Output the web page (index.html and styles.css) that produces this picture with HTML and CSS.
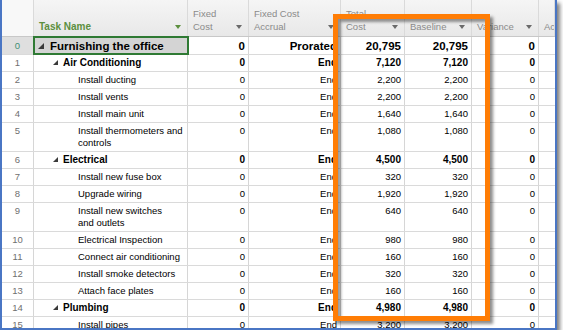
FILE: index.html
```html
<!DOCTYPE html>
<html lang="en">
<head>
  <meta charset="UTF-8" />
  <meta name="viewport" content="width=device-width, initial-scale=1.0" />
  <title>Furnishing the office - Cost table</title>
  <link rel="stylesheet" href="styles.css">
</head>
<body>
  <div class="sheet">
    <div class="head">
      <div class="c num"></div>
      <div class="c task green"><span>Task Name</span><span class="arrow"></span></div>
      <div class="c fc"><span>Fixed<br>Cost</span><span class="arrow"></span></div>
      <div class="c acc"><span>Fixed Cost<br>Accrual</span><span class="arrow"></span></div>
      <div class="c tot"><span>Total<br>Cost</span><span class="arrow"></span></div>
      <div class="c base"><span>Baseline</span><span class="arrow"></span></div>
      <div class="c var"><span>Variance</span><span class="arrow"></span></div>
      <div class="c act"><span>Actual Cost</span><span class="arrow"></span></div>
    </div>

    <div class="row top">
      <div class="c num">0</div>
      <div class="c task lv0"><span class="tog"></span>Furnishing the office</div>
      <div class="c fc">0</div>
      <div class="c acc">Prorated</div>
      <div class="c tot">20,795</div>
      <div class="c base">20,795</div>
      <div class="c var">0</div>
      <div class="c act"></div>
    </div>

    <div class="row sum">
      <div class="c num">1</div>
      <div class="c task lv1"><span class="tog"></span>Air Conditioning</div>
      <div class="c fc">0</div>
      <div class="c acc">End</div>
      <div class="c tot">7,120</div>
      <div class="c base">7,120</div>
      <div class="c var">0</div>
      <div class="c act"></div>
    </div>
    <div class="row">
      <div class="c num">2</div>
      <div class="c task lv2">Install ducting</div>
      <div class="c fc">0</div>
      <div class="c acc">End</div>
      <div class="c tot">2,200</div>
      <div class="c base">2,200</div>
      <div class="c var">0</div>
      <div class="c act"></div>
    </div>
    <div class="row">
      <div class="c num">3</div>
      <div class="c task lv2">Install vents</div>
      <div class="c fc">0</div>
      <div class="c acc">End</div>
      <div class="c tot">2,200</div>
      <div class="c base">2,200</div>
      <div class="c var">0</div>
      <div class="c act"></div>
    </div>
    <div class="row">
      <div class="c num">4</div>
      <div class="c task lv2">Install main unit</div>
      <div class="c fc">0</div>
      <div class="c acc">End</div>
      <div class="c tot">1,640</div>
      <div class="c base">1,640</div>
      <div class="c var">0</div>
      <div class="c act"></div>
    </div>
    <div class="row tall">
      <div class="c num">5</div>
      <div class="c task lv2">Install thermometers and<br>controls</div>
      <div class="c fc">0</div>
      <div class="c acc">End</div>
      <div class="c tot">1,080</div>
      <div class="c base">1,080</div>
      <div class="c var">0</div>
      <div class="c act"></div>
    </div>

    <div class="row sum">
      <div class="c num">6</div>
      <div class="c task lv1"><span class="tog"></span>Electrical</div>
      <div class="c fc">0</div>
      <div class="c acc">End</div>
      <div class="c tot">4,500</div>
      <div class="c base">4,500</div>
      <div class="c var">0</div>
      <div class="c act"></div>
    </div>
    <div class="row">
      <div class="c num">7</div>
      <div class="c task lv2">Install new fuse box</div>
      <div class="c fc">0</div>
      <div class="c acc">End</div>
      <div class="c tot">320</div>
      <div class="c base">320</div>
      <div class="c var">0</div>
      <div class="c act"></div>
    </div>
    <div class="row">
      <div class="c num">8</div>
      <div class="c task lv2">Upgrade wiring</div>
      <div class="c fc">0</div>
      <div class="c acc">End</div>
      <div class="c tot">1,920</div>
      <div class="c base">1,920</div>
      <div class="c var">0</div>
      <div class="c act"></div>
    </div>
    <div class="row tall">
      <div class="c num">9</div>
      <div class="c task lv2">Install new switches<br>and outlets</div>
      <div class="c fc">0</div>
      <div class="c acc">End</div>
      <div class="c tot">640</div>
      <div class="c base">640</div>
      <div class="c var">0</div>
      <div class="c act"></div>
    </div>
    <div class="row">
      <div class="c num">10</div>
      <div class="c task lv2">Electrical Inspection</div>
      <div class="c fc">0</div>
      <div class="c acc">End</div>
      <div class="c tot">980</div>
      <div class="c base">980</div>
      <div class="c var">0</div>
      <div class="c act"></div>
    </div>
    <div class="row">
      <div class="c num">11</div>
      <div class="c task lv2">Connect air conditioning</div>
      <div class="c fc">0</div>
      <div class="c acc">End</div>
      <div class="c tot">160</div>
      <div class="c base">160</div>
      <div class="c var">0</div>
      <div class="c act"></div>
    </div>
    <div class="row">
      <div class="c num">12</div>
      <div class="c task lv2">Install smoke detectors</div>
      <div class="c fc">0</div>
      <div class="c acc">End</div>
      <div class="c tot">320</div>
      <div class="c base">320</div>
      <div class="c var">0</div>
      <div class="c act"></div>
    </div>
    <div class="row">
      <div class="c num">13</div>
      <div class="c task lv2">Attach face plates</div>
      <div class="c fc">0</div>
      <div class="c acc">End</div>
      <div class="c tot">160</div>
      <div class="c base">160</div>
      <div class="c var">0</div>
      <div class="c act"></div>
    </div>

    <div class="row sum">
      <div class="c num">14</div>
      <div class="c task lv1"><span class="tog"></span>Plumbing</div>
      <div class="c fc">0</div>
      <div class="c acc">End</div>
      <div class="c tot">4,980</div>
      <div class="c base">4,980</div>
      <div class="c var">0</div>
      <div class="c act"></div>
    </div>
    <div class="row">
      <div class="c num">15</div>
      <div class="c task lv2">Install pipes</div>
      <div class="c fc">0</div>
      <div class="c acc">End</div>
      <div class="c tot">3,200</div>
      <div class="c base">3,200</div>
      <div class="c var">0</div>
      <div class="c act"></div>
    </div>

    <div class="callout"></div>
  </div>
</body>
</html>
```

FILE: styles.css
```css
* {
  box-sizing: border-box;
  margin: 0;
  padding: 0;
}

body {
  font-family: "Liberation Sans", Arial, sans-serif;
  background-color: #fff;
  color: #000;
}

.sheet {
  position: relative;
  width: 557px;
  height: 330px;
  border: 2px solid #4a76c4;
  border-top: 0;
  overflow: hidden;
  background-color: #fff;
  box-shadow: 3px 3px 4px rgba(0, 0, 0, 0.5);
}

/* columns */
.c {
  flex: none;
  border-right: 1px solid #d6d6d6;
  white-space: nowrap;
  overflow: hidden;
}

.num { width: 32px; }
.task { width: 154px; }
.fc { width: 61px; }
.acc { width: 92px; }
.tot { width: 64px; }
.base { width: 67px; }
.var { width: 67px; }
.act { width: 60px; }

/* header */
.head {
  display: flex;
  height: 37px;
  border-bottom: 1px solid #c8c8c8;
  background: linear-gradient(#f5f5f5, #e8e8e8);
}

.head .c {
  display: flex;
  align-items: flex-end;
  justify-content: space-between;
  padding: 0 6px 3px 5px;
  font-size: 9.5px;
  line-height: 13px;
  color: #8a8a8a;
  border-right-color: #dadada;
}

.head .num {
  background-color: #f8f8f8;
}

.head .act {
  width: 16px;
}

.head .green {
  color: #5c8f3e;
  font-weight: bold;
  font-size: 10px;
}

.arrow {
  flex: none;
  width: 0;
  height: 0;
  border-left: 3.5px solid transparent;
  border-right: 3.5px solid transparent;
  border-top: 4px solid #6a6a6a;
  margin-bottom: 4px;
}

.head .green .arrow {
  border-top-color: #5c8f3e;
}

/* body rows */
.row {
  display: flex;
  height: 17px;
  border-bottom: 1px solid #dadada;
  font-size: 9.5px;
  line-height: 12px;
}

.row .c {
  padding: 2px 3px 0 3px;
  text-align: right;
}

.row .num {
  text-align: center;
  color: #6f6f6f;
  font-weight: normal;
  font-size: 9.5px;
}

.row .task {
  text-align: left;
}

.row.tall {
  height: 29px;
}

.row.sum {
  font-weight: bold;
  font-size: 10px;
}

.row.top {
  height: 18px;
  font-weight: bold;
  font-size: 11.5px;
  line-height: 14px;
}

.row.top .num {
  background-color: #dfdfdf;
  color: #3e8f74;
}

.row.top .task {
  position: relative;
  z-index: 1;
  background-color: #d4d4d4;
  outline: 2px solid #2f7a34;
  outline-offset: -1px;
  overflow: visible;
}

.lv0 { padding-left: 4px !important; }
.lv1 { padding-left: 19px !important; }
.lv2 { padding-left: 44px !important; }

.tog {
  display: inline-block;
  width: 0;
  height: 0;
  border-left: 5px solid transparent;
  border-bottom: 5px solid #3a3a3a;
  margin-right: 5px;
  vertical-align: 1px;
}

.lv0 .tog {
  border-left-width: 6px;
  border-bottom-width: 6px;
  margin-right: 6px;
}

/* orange highlight box over the cost columns */
.callout {
  position: absolute;
  left: 331px;
  top: 14px;
  width: 157px;
  height: 307px;
  border: 5px solid #ff7d05;
  box-shadow: 3px 3px 3px rgba(0, 0, 0, 0.45), inset 3px 3px 3px rgba(0, 0, 0, 0.4);
}
```
